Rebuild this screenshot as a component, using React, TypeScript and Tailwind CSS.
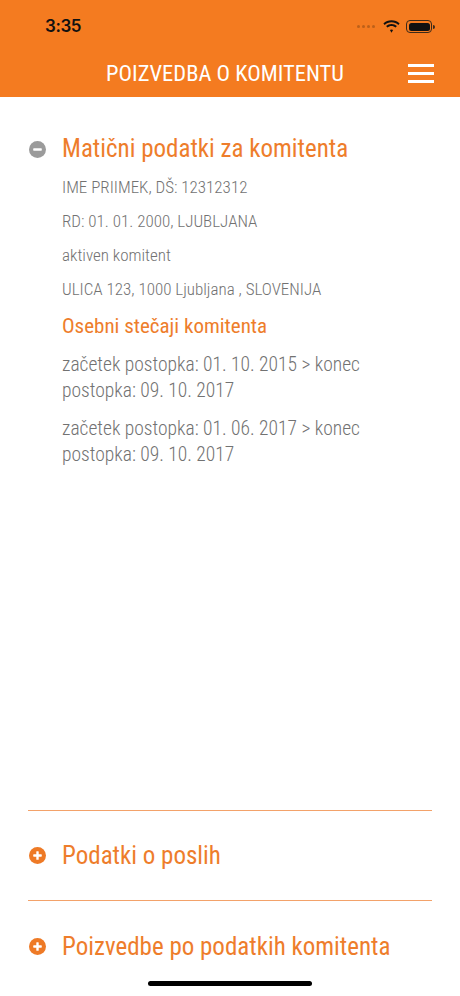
import React from 'react';

const font = { fontFamily: '"Roboto Condensed", "Liberation Sans Narrow", "DejaVu Sans Condensed", Roboto, sans-serif' };

function Wifi() {
  return (
    <svg width="17" height="13" viewBox="0 0 17 13" fill="#111">
      <path d="M8.5 2.2c2.6 0 5 1 6.8 2.7l1.3-1.4C14.5 1.5 11.6.3 8.5.3S2.5 1.5.4 3.5l1.3 1.4C3.5 3.2 5.9 2.2 8.5 2.2z" />
      <path d="M8.5 5.9c1.6 0 3 .6 4.1 1.6l1.3-1.4c-1.5-1.3-3.4-2.1-5.4-2.1s-3.9.8-5.4 2.1l1.3 1.4c1.1-1 2.5-1.6 4.1-1.6z" />
      <path d="M8.5 9.4c.7 0 1.2.2 1.6.6L8.5 12.7 6.9 10c.4-.4.9-.6 1.6-.6z" />
    </svg>
  );
}

function Battery() {
  return (
    <div className="flex items-center">
      <div className="w-[26px] h-[13px] rounded-[4px] border border-[#3a2a1a] p-[1.5px]">
        <div className="w-full h-full rounded-[2.5px] bg-[#111]" />
      </div>
      <div className="w-[2px] h-[4px] rounded-r-sm bg-[#3a2a1a] ml-[1px]" />
    </div>
  );
}

function CircleIcon({ plus, color }: { plus?: boolean; color: string }) {
  return (
    <svg width="17" height="17" viewBox="0 0 17 17" className="shrink-0">
      <circle cx="8.5" cy="8.5" r="8.5" fill={color} />
      <rect x="4.2" y="7.3" width="8.6" height="2.4" rx="0.6" fill="#fff" />
      {plus && <rect x="7.3" y="4.2" width="2.4" height="8.6" rx="0.6" fill="#fff" />}
    </svg>
  );
}

function Section({ title, last }: { title: string; last?: boolean }) {
  return (
    <div className={`mx-7 border-t border-[#F3A26A] flex items-center ${last ? 'h-[96px] pb-[4px]' : 'h-[90px]'}`}>
      <div className="flex items-center">
        <div className="w-[34px] pl-[1px]">
          <CircleIcon plus color="#EE7A26" />
        </div>
        <span className="text-[25px] leading-[32px] text-[#EE7D2B]">{title}</span>
      </div>
    </div>
  );
}

export default function App() {
  return (
    <div className="w-[460px] h-[996px] bg-white flex flex-col relative overflow-hidden" style={font}>
      {/* Glava */}
      <header className="bg-[#F47B20] h-[97px] shrink-0 flex flex-col">
        <div className="h-[50px] pt-[3px] flex items-center justify-between pl-[45px] pr-[25px]">
          <span className="text-[17px] font-semibold text-[#111] tracking-tight" style={{ fontFamily: 'Inter, "Liberation Sans", sans-serif' }}>
            3:35
          </span>
          <div className="flex items-center gap-[6px]">
            <div className="flex gap-[2px] mr-[2px] opacity-40">
              <span className="w-[3px] h-[3px] rounded-full bg-[#6b3a10]" />
              <span className="w-[3px] h-[3px] rounded-full bg-[#6b3a10]" />
              <span className="w-[3px] h-[3px] rounded-full bg-[#6b3a10]" />
              <span className="w-[3px] h-[3px] rounded-full bg-[#6b3a10]" />
            </div>
            <Wifi />
            <Battery />
          </div>
        </div>
        <div className="flex-1 relative flex items-center justify-center">
          <h1 className="text-[22.5px] text-white ml-[-10px]">POIZVEDBA O KOMITENTU</h1>
          <button className="absolute right-[26px] top-[14px] flex flex-col gap-[5px]" aria-label="Meni">
            <span className="block w-[26px] h-[3px] bg-white" />
            <span className="block w-[26px] h-[3px] bg-white" />
            <span className="block w-[26px] h-[3px] bg-white" />
          </button>
        </div>
      </header>

      {/* Matični podatki */}
      <main className="flex-1 pt-9 pl-[29px] pr-6">
        <div className="flex items-center">
          <div className="w-[33px]">
            <CircleIcon color="#9B9B9B" />
          </div>
          <h2 className="text-[25px] leading-[32px] text-[#EE7D2B]">Matični podatki za komitenta</h2>
        </div>
        <div className="pl-[33px] text-[#727272] font-light">
          <div className="mt-[5px] text-[17px] leading-[34px]">
            <p>IME PRIIMEK, DŠ: 12312312</p>
            <p>RD: 01. 01. 2000, LJUBLJANA</p>
            <p>aktiven komitent</p>
            <p>ULICA 123, 1000 Ljubljana , SLOVENIJA</p>
          </div>
          <h3 className="mt-[6px] text-[21px] leading-[28px] text-[#EE7D2B] font-normal">Osebni stečaji komitenta</h3>
          <div className="text-[19.5px] leading-[26px]">
            <p className="mt-[12px]">začetek postopka: 01. 10. 2015 &gt; konec postopka: 09. 10. 2017</p>
            <p className="mt-[12px]">začetek postopka: 01. 06. 2017 &gt; konec postopka: 09. 10. 2017</p>
          </div>
        </div>
      </main>

      <Section title="Podatki o poslih" />
      <Section title="Poizvedbe po podatkih komitenta" last />

      <div className="absolute bottom-[10px] left-1/2 -translate-x-1/2 w-[164px] h-[5px] rounded-full bg-black" />
    </div>
  );
}
